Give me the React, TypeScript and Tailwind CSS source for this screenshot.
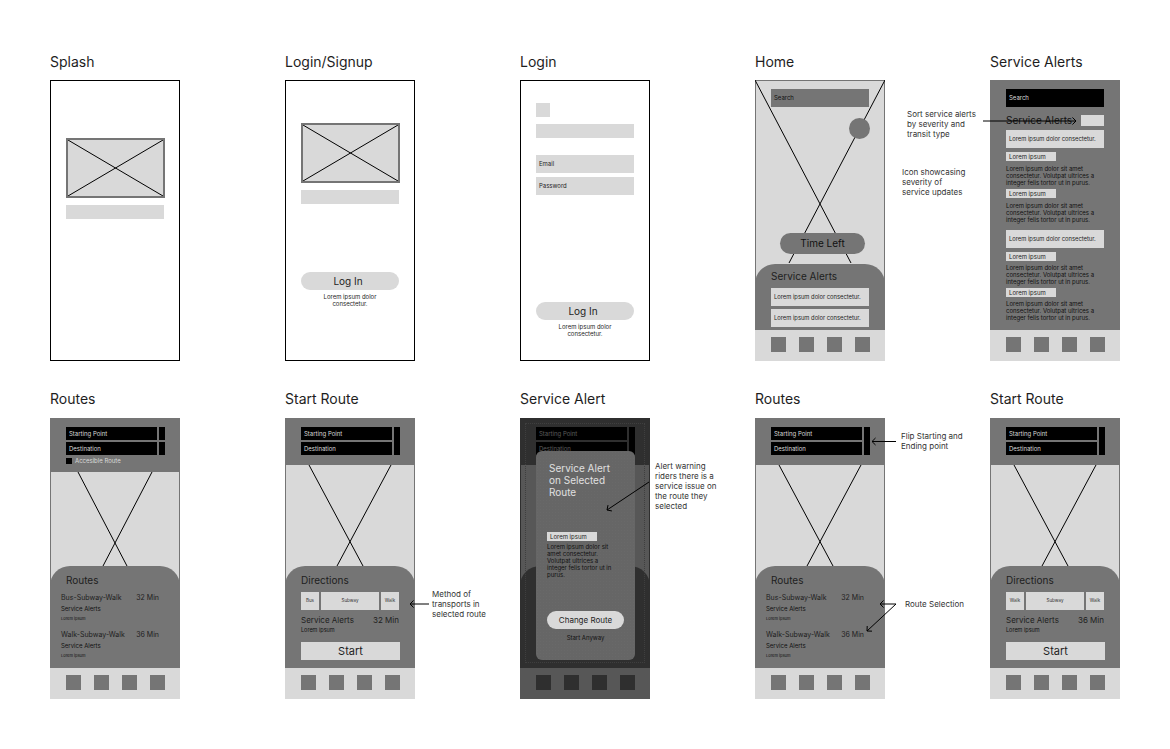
import type { ReactNode } from 'react'

const lorem3 = (
  <>
    Lorem ipsum dolor sit amet
    <br />
    consectetur. Volutpat ultrices a
    <br />
    integer felis tortor ut in purus.
  </>
)

function ImageBox() {
  return (
    <div className="relative w-[99px] h-[60px] bg-[#d9d9d9] border-2 border-[#757575]">
      <svg className="absolute inset-0 w-full h-full" viewBox="0 0 95 56" preserveAspectRatio="none">
        <path d="M0 0L95 56M95 0L0 56" stroke="#000" strokeWidth="1" fill="none" />
      </svg>
    </div>
  )
}

function Board({
  title,
  outlined,
  low,
  children,
}: {
  title: string
  outlined?: boolean
  low?: boolean
  children: ReactNode
}) {
  return (
    <div>
      <h2 className={`h-[17px] text-[14px] leading-[17px] font-normal text-[#1e1e1e] ${low ? 'mb-[11px]' : 'mb-[10px]'}`}>
        {title}
      </h2>
      <div
        className={`relative flex flex-col w-[130px] h-[281px] overflow-hidden ${
          outlined ? 'bg-white border border-black' : 'bg-[#757575]'
        }`}
      >
        {children}
      </div>
    </div>
  )
}

function BottomNav() {
  return (
    <div className="flex shrink-0 h-[31px] gap-[13px] pl-[16px] pt-[7px] bg-[#d9d9d9]">
      <div className="w-[15px] h-[15px] bg-[#757575]" />
      <div className="w-[15px] h-[15px] bg-[#757575]" />
      <div className="w-[15px] h-[15px] bg-[#757575]" />
      <div className="w-[15px] h-[15px] bg-[#757575]" />
    </div>
  )
}

function MapArea({ lines, children }: { lines: string; children?: ReactNode }) {
  return (
    <div className="relative flex-1 min-h-0 bg-[#d9d9d9] border-x border-[#757575]">
      <svg className="absolute top-0 left-[-1px] w-[130px] h-[220px]" viewBox="0 0 130 220">
        <path d={lines} stroke="#000" strokeWidth="1" fill="none" />
      </svg>
      {children}
    </div>
  )
}

function RouteInputs({ accessible, joined }: { accessible?: boolean; joined?: boolean }) {
  return (
    <div className={`shrink-0 pt-[9px] pl-[16px] ${accessible ? 'h-[54px]' : 'h-[47px]'}`}>
      <div className="flex gap-[2px]">
        <div className="flex flex-col gap-[2px] w-[91px]">
          <div className="h-[13px] bg-black pl-[3px] text-[6px] leading-[13px] text-[#d9d9d9]">Starting Point</div>
          <div className="h-[13px] bg-black pl-[3px] text-[6px] leading-[13px] text-[#d9d9d9]">Destination</div>
        </div>
        {joined ? (
          <div className="w-[6px] h-[28px] bg-black" />
        ) : (
          <div className="flex flex-col gap-[2px] w-[6px]">
            <div className="h-[13px] bg-black" />
            <div className="h-[13px] bg-black" />
          </div>
        )}
      </div>
      {accessible && (
        <div className="flex items-center gap-[3px] mt-[3px]">
          <div className="w-[6px] h-[6px] bg-black" />
          <span className="text-[6px] leading-[6px] text-[#d9d9d9]">Accesible Route</span>
        </div>
      )}
    </div>
  )
}

function Sheet({ children }: { children?: ReactNode }) {
  return <div className="relative shrink-0 h-[102px] -mt-[20px] rounded-t-[20px] bg-[#757575]">{children}</div>
}

function RouteOption({ name, time, first }: { name: string; time: string; first?: boolean }) {
  return (
    <div className={first ? 'mt-[6px]' : 'mt-[9px]'}>
      <div className="flex justify-between whitespace-nowrap text-[7px] leading-[10px] text-[#1e1e1e]">
        <span>{name}</span>
        <span>{time}</span>
      </div>
      <div className="mt-[2px] text-[6px] leading-[8px] text-[#111]">Service Alerts</div>
      <div className="mt-[3px] text-[4px] leading-[5px] text-[#111]">Lorem ipsum</div>
    </div>
  )
}

function RoutesBoard({ accessible, joined }: { accessible?: boolean; joined?: boolean }) {
  return (
    <Board title="Routes" low>
      <RouteInputs accessible={accessible} joined={joined} />
      <MapArea lines={accessible ? 'M28 0L77 94M102 0L53 94' : 'M24 0L78 101M106 0L52 101'} />
      <Sheet>
        <div className="pt-[8px] pl-[11px] pr-[21px]">
          <div className="pl-[5px] text-[10px] leading-[13px] text-[#1e1e1e]">Routes</div>
          <RouteOption first name="Bus-Subway-Walk" time="32 Min" />
          <RouteOption name="Walk-Subway-Walk" time="36 Min" />
        </div>
      </Sheet>
      <BottomNav />
    </Board>
  )
}

function Chip({ label, wide }: { label: string; wide?: boolean }) {
  return (
    <div
      className={`h-[18px] bg-[#d9d9d9] text-center text-[4.5px] leading-[18px] text-[#333] ${
        wide ? 'w-[58px]' : 'w-[18px]'
      }`}
    >
      {label}
    </div>
  )
}

function StartRouteBoard({ first, time }: { first: string; time: string }) {
  return (
    <Board title="Start Route" low>
      <RouteInputs joined />
      <MapArea lines="M24 0L78 101M106 0L52 101" />
      <Sheet>
        <div className="pt-[8px] pl-[16px] pr-[16px]">
          <div className="text-[10px] leading-[13px] text-[#1e1e1e]">Directions</div>
          <div className="flex gap-[2px] mt-[5px]">
            <Chip label={first} />
            <Chip label="Subway" wide />
            <Chip label="Walk" />
          </div>
          <div className="flex justify-between mt-[5px] text-[8px] leading-[10px] text-[#1e1e1e]">
            <span>Service Alerts</span>
            <span>{time}</span>
          </div>
          <div className="mt-[2px] text-[5.5px] leading-[7px] text-[#111]">Lorem ipsum</div>
          <div className="w-[99px] h-[18px] mt-[8px] bg-[#d9d9d9] text-center text-[11px] leading-[18px] text-[#1e1e1e]">
            Start
          </div>
        </div>
      </Sheet>
      <BottomNav />
    </Board>
  )
}

function AlertBlock({ tight }: { tight?: boolean }) {
  return (
    <>
      <div className="w-[98px] h-[18px] bg-[#d9d9d9] pl-[3px] text-[5.8px] leading-[18px] text-[#1e1e1e]">
        Lorem ipsum dolor consectetur.
      </div>
      <div className="w-[50px] h-[9px] mt-[4px] bg-[#d9d9d9] pl-[3px] text-[6px] leading-[9px] text-[#1e1e1e]">
        Lorem ipsum
      </div>
      <p className={`text-[6px] leading-[7px] text-[#111] ${tight ? 'mt-[3px]' : 'mt-[4px]'}`}>{lorem3}</p>
      <div className="w-[50px] h-[9px] mt-[3px] bg-[#d9d9d9] pl-[3px] text-[6px] leading-[9px] text-[#1e1e1e]">
        Lorem ipsum
      </div>
      <p className={`text-[6px] leading-[7px] text-[#111] ${tight ? 'mt-[3px]' : 'mt-[4px]'}`}>{lorem3}</p>
    </>
  )
}

function Arrow({ x1, y1, x2, y2, color = '#000' }: { x1: number; y1: number; x2: number; y2: number; color?: string }) {
  const a = Math.atan2(y2 - y1, x2 - x1)
  const h = 5
  const p = (d: number) => `${x2 - h * Math.cos(a + d)} ${y2 - h * Math.sin(a + d)}`
  return (
    <g stroke={color} fill="none" strokeWidth="1">
      <path d={`M${x1} ${y1}L${x2} ${y2}`} />
      <path d={`M${p(0.78)}L${x2} ${y2}L${p(-0.78)}`} />
    </g>
  )
}

function Note({ className, children }: { className: string; children: ReactNode }) {
  return <p className={`absolute text-[8px] leading-[10px] text-[#333] whitespace-nowrap ${className}`}>{children}</p>
}

export default function App() {
  return (
    <div className="relative w-[1170px] h-[749px] overflow-hidden bg-white font-['Inter',sans-serif]">
      <div className="grid grid-cols-[repeat(5,130px)] gap-x-[105px] gap-y-[29px] pl-[50px] pt-[53px]">
        {/* top row */}
        <Board title="Splash" outlined>
          <div className="pt-[57px] pl-[15px]">
            <ImageBox />
            <div className="w-[98px] h-[14px] mt-[7px] bg-[#d9d9d9]" />
          </div>
        </Board>

        <Board title="Login/Signup" outlined>
          <div className="pt-[42px] pl-[15px]">
            <ImageBox />
            <div className="w-[98px] h-[14px] mt-[7px] bg-[#d9d9d9]" />
            <div className="w-[98px] h-[18px] mt-[68px] pr-[4px] rounded-full bg-[#d9d9d9] text-center text-[10px] leading-[18px] text-[#1e1e1e]">
              Log In
            </div>
            <p className="w-[98px] mt-[3px] text-center text-[6px] leading-[7px] text-[#1e1e1e]">
              Lorem ipsum dolor
              <br />
              consectetur.
            </p>
          </div>
        </Board>

        <Board title="Login" outlined>
          <div className="pt-[22px] pl-[15px]">
            <div className="w-[14px] h-[14px] bg-[#d9d9d9]" />
            <div className="w-[98px] h-[14px] mt-[7px] bg-[#d9d9d9]" />
            <div className="w-[98px] h-[18px] mt-[17px] bg-[#d9d9d9] pl-[3px] text-[6px] leading-[17px] text-[#1e1e1e]">
              Email
            </div>
            <div className="w-[98px] h-[18px] mt-[4px] bg-[#d9d9d9] pl-[3px] text-[6px] leading-[17px] text-[#1e1e1e]">
              Password
            </div>
            <div className="w-[98px] h-[18px] mt-[107px] pr-[4px] rounded-full bg-[#d9d9d9] text-center text-[10px] leading-[18px] text-[#1e1e1e]">
              Log In
            </div>
            <p className="w-[98px] mt-[3px] text-center text-[6px] leading-[7px] text-[#1e1e1e]">
              Lorem ipsum dolor
              <br />
              consectetur.
            </p>
          </div>
        </Board>

        <Board title="Home">
          <MapArea lines="M0 0L96 183M130 0L34 183">
            <div className="absolute left-0 right-0 top-0 h-px bg-[#757575]" />
            <div className="absolute left-[15px] top-[9px] w-[98px] h-[18px] bg-[#757575] pl-[3px] text-[6px] leading-[18px] text-[#111]">
              Search
            </div>
            <div className="absolute left-[93px] top-[38px] w-[21px] h-[21px] rounded-full bg-[#757575]" />
            <div className="absolute left-[24px] top-[153px] w-[85px] h-[21px] rounded-full bg-[#757575] text-center text-[10px] leading-[21px] text-[#111]">
              Time Left
            </div>
          </MapArea>
          <div className="relative shrink-0 h-[66px] -mt-[20px] rounded-t-[20px] bg-[#757575] pt-[6px] pl-[16px]">
            <div className="text-[10px] leading-[13px] text-[#1e1e1e]">Service Alerts</div>
            <div className="w-[98px] h-[18px] mt-[5px] bg-[#d9d9d9] pl-[3px] text-[5.8px] leading-[18px] text-[#1e1e1e]">
              Lorem ipsum dolor consectetur.
            </div>
            <div className="w-[98px] h-[18px] mt-[3px] bg-[#d9d9d9] pl-[3px] text-[5.8px] leading-[18px] text-[#1e1e1e]">
              Lorem ipsum dolor consectetur.
            </div>
          </div>
          <BottomNav />
        </Board>

        <Board title="Service Alerts">
          <div className="flex-1 pt-[9px] pl-[16px]">
            <div className="w-[98px] h-[18px] bg-black pl-[3px] text-[6px] leading-[18px] text-[#d9d9d9]">Search</div>
            <div className="flex justify-between items-center w-[98px] h-[11px] mt-[8px]">
              <span className="text-[10px] leading-[11px] text-[#111]">Service Alerts</span>
              <div className="w-[23px] h-[11px] bg-[#d9d9d9]" />
            </div>
            <div className="mt-[4px]">
              <AlertBlock />
            </div>
            <div className="mt-[7px]">
              <AlertBlock tight />
            </div>
          </div>
          <BottomNav />
        </Board>

        {/* bottom row */}
        <RoutesBoard accessible />
        <StartRouteBoard first="Bus" time="32 Min" />

        <Board title="Service Alert" low>
          <RouteInputs joined />
          <MapArea lines="M24 0L78 101M106 0L52 101" />
          <Sheet />
          <BottomNav />
          <div className="absolute inset-0 bg-black/60" />
          <div className="absolute left-[5px] right-[5px] top-[5px] bottom-[36px] border border-dotted border-[#3f3f3f]" />
          <div className="absolute left-[16px] top-[33px] w-[99px] h-[209px] rounded-[6px] bg-[#666] bg-[radial-gradient(#696969_0.6px,transparent_0.6px)] bg-[length:3px_3px] pt-[11px] pl-[11px]">
            <h3 className="pl-[2px] text-[10px] leading-[12px] font-normal text-[#e0e0e0]">
              Service Alert
              <br />
              on Selected
              <br />
              Route
            </h3>
            <div className="w-[50px] h-[9px] mt-[34px] bg-[#d9d9d9] pl-[3px] text-[6px] leading-[9px] text-[#1e1e1e]">
              Lorem ipsum
            </div>
            <p className="mt-[2px] text-[6px] leading-[7px] text-[#111]">
              Lorem ipsum dolor sit
              <br />
              amet consectetur.
              <br />
              Volutpat ultrices a
              <br />
              integer felis tortor ut in
              <br />
              purus.
            </p>
            <div className="w-[77px] h-[18px] mt-[33px] rounded-full bg-[#d9d9d9] text-center text-[8px] leading-[18px] text-[#1e1e1e]">
              Change Route
            </div>
            <div className="w-[77px] mt-[5px] text-center text-[6px] leading-[7px] text-[#111]">Start Anyway</div>
          </div>
        </Board>

        <RoutesBoard joined />
        <StartRouteBoard first="Walk" time="36 Min" />
      </div>

      {/* annotations on the canvas */}
      <Note className="left-[907px] top-[109px]">
        Sort service alerts
        <br />
        by severity and
        <br />
        transit type
      </Note>
      <Note className="left-[902px] top-[167px]">
        Icon showcasing
        <br />
        severity of
        <br />
        service updates
      </Note>
      <Note className="left-[432px] top-[589px]">
        Method of
        <br />
        transports in
        <br />
        selected route
      </Note>
      <Note className="left-[655px] top-[461px]">
        Alert warning
        <br />
        riders there is a
        <br />
        service issue on
        <br />
        the route they
        <br />
        selected
      </Note>
      <Note className="left-[901px] top-[431px]">
        Flip Starting and
        <br />
        Ending point
      </Note>
      <Note className="left-[905px] top-[599px]">Route Selection</Note>

      <svg className="absolute inset-0 w-[1170px] h-[749px] pointer-events-none" viewBox="0 0 1170 749">
        <Arrow x1={983} y1={121} x2={1076} y2={121} />
        <Arrow x1={429} y1={604} x2={410} y2={604} />
        <Arrow x1={649} y1={482} x2={607} y2={510} />
        <Arrow x1={896} y1={441.5} x2={872} y2={441.5} />
        <Arrow x1={896} y1={604} x2={880} y2={604} />
        <Arrow x1={896} y1={604} x2={867} y2={631} />
      </svg>
    </div>
  )
}
